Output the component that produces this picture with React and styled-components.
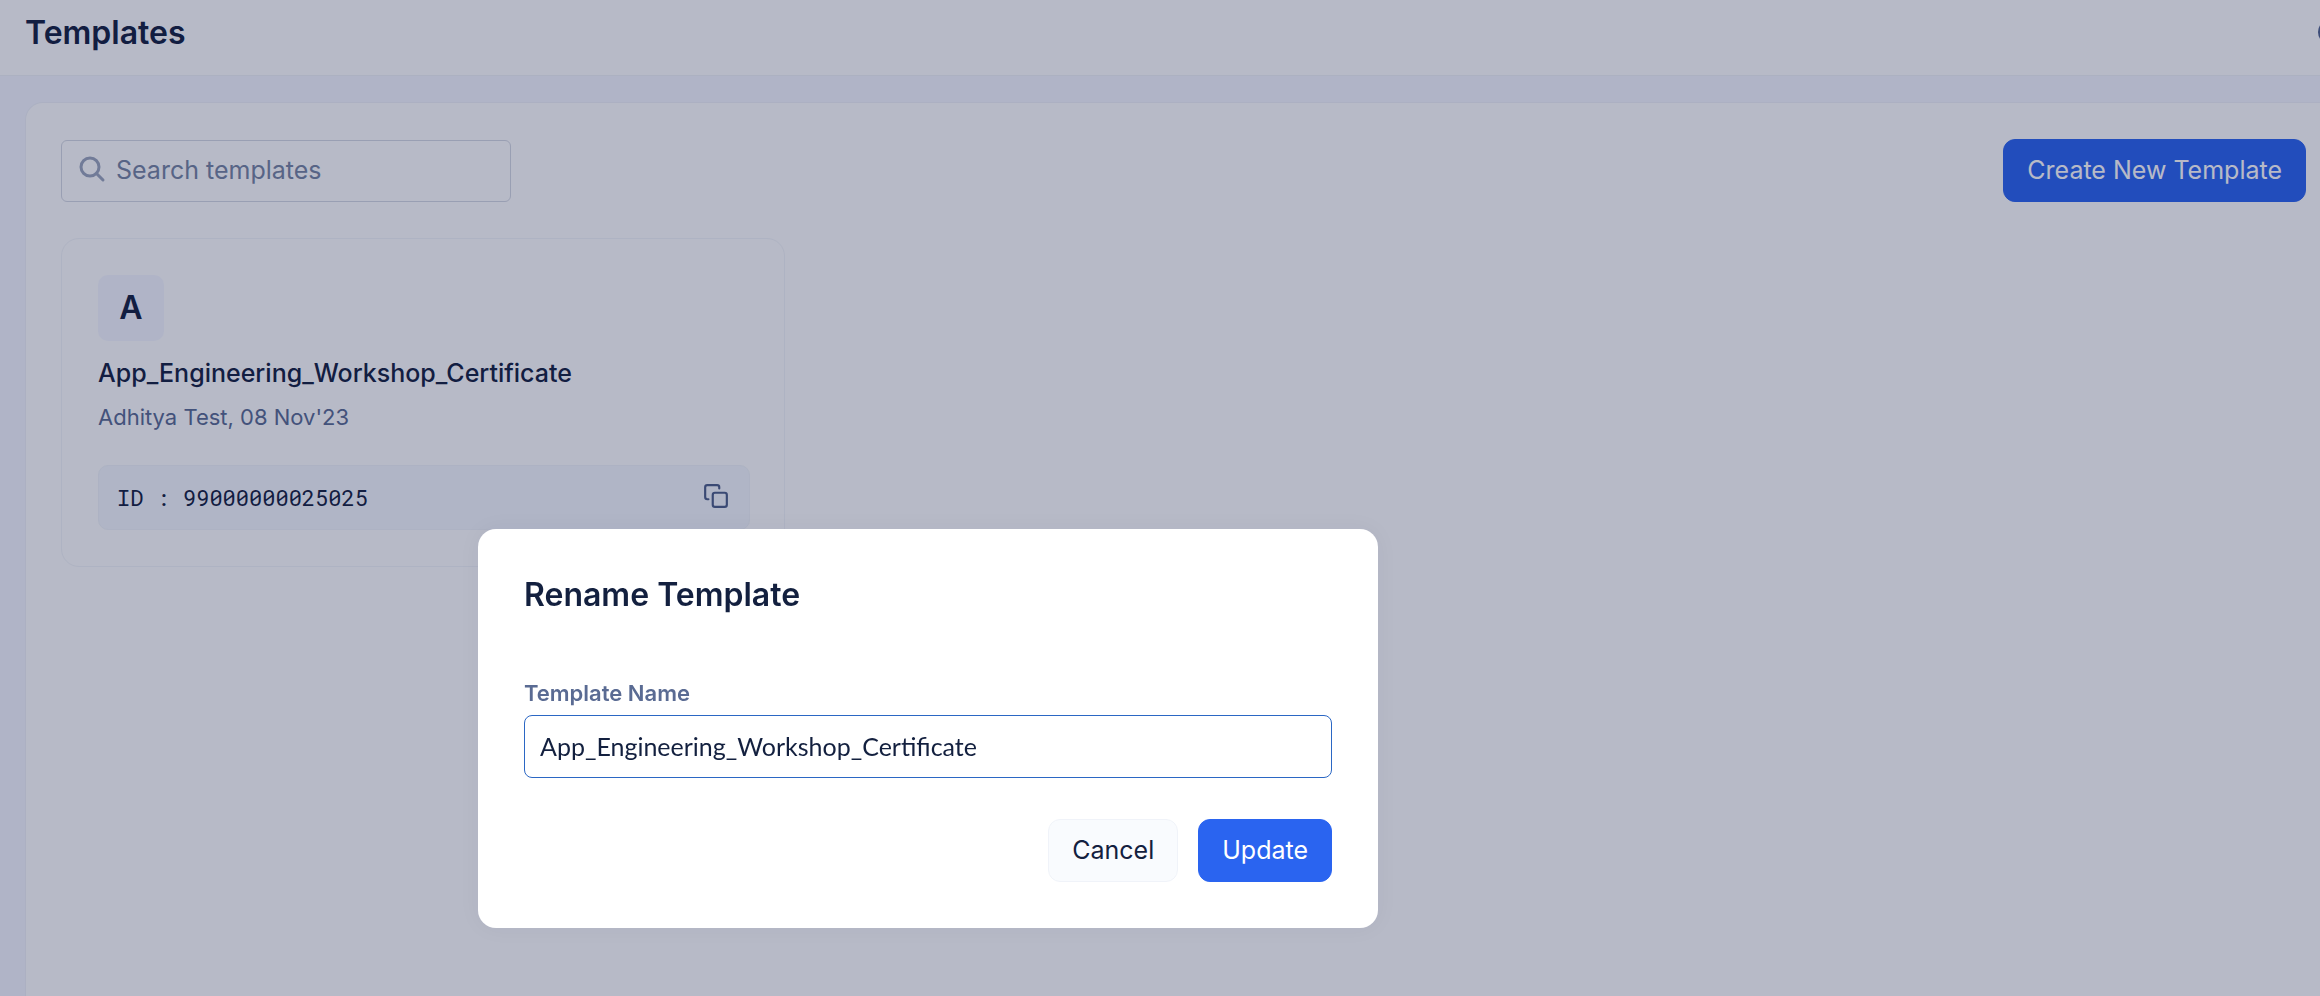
import React, { useState } from "react";
import styled, { createGlobalStyle } from "styled-components";

const GlobalStyle = createGlobalStyle`
    * {
        box-sizing: border-box;
    }
    body {
        margin: 0;
        background-color: #f5f7ff;
        color: #13203f;
        font-family: "Inter", "Liberation Sans", sans-serif;
        overflow: hidden;
    }
    button, input {
        font-family: inherit;
    }
`;
const Page = styled.div`
    min-height: 100vh;
    display: flex;
    flex-direction: column;
    background-color: #f5f7ff;
`;
const Header = styled.header`
    position: relative;
    display: flex;
    align-items: center;
    height: 76px;
    padding: 0 25px 10px;
    background-color: #fff;
    border-bottom: 1px solid #f0f2f7;
`;
const PageTitle = styled.h1`
    margin: 0;
    font-size: 32px;
    font-weight: 600;
    line-height: 40px;
`;
// cut off by the right edge of the window
const StatusDot = styled.span`
    position: absolute;
    right: -22px;
    top: 20px;
    width: 24px;
    height: 24px;
    border-radius: 50%;
    background-color: #4f628e;
`;
const Panel = styled.main`
    flex: 1;
    margin: 26px 0 0 25px;
    padding: 36px 14px 36px 35px;
    background-color: #fff;
    border: 1px solid #eff1f8;
    border-right: none;
    border-bottom: none;
    border-radius: 18px 0 0 0;
`;
const Toolbar = styled.div`
    display: flex;
    align-items: center;
    justify-content: space-between;
    margin-bottom: 36px;
`;
const SearchBox = styled.label`
    display: flex;
    align-items: center;
    gap: 10px;
    width: 450px;
    height: 62px;
    padding: 0 16px 2px;
    border: 1px solid #d5d9e2;
    border-radius: 6px;
`;
const SearchInput = styled.input`
    flex: 1;
    min-width: 0;
    padding: 0;
    border: none;
    outline: none;
    background: transparent;
    font-size: 25px;
    line-height: 32px;
    color: #13203f;
    &::placeholder {
        color: #7685a3;
        opacity: 1;
    }
`;
const Button = styled.button`
    height: 63px;
    padding: 0 23px 2px;
    font-size: 25px;
    line-height: 32px;
    border-radius: 12px;
    border: 1px solid ${(props) => (props.$primary ? "#2a64f0" : "#f0f3f9")};
    background-color: ${(props) => (props.$primary ? "#2a64f0" : "#f9fbfe")};
    color: ${(props) => (props.$primary ? "#fff" : "#13203f")};
    cursor: pointer;
`;
const Card = styled.article`
    width: 724px;
    padding: 36px 34px 36px 36px;
    border: 1px solid #f3f5f9;
    border-radius: 18px;
`;
const Avatar = styled.div`
    display: flex;
    align-items: center;
    justify-content: center;
    width: 66px;
    height: 66px;
    border-radius: 10px;
    background-color: #f5f7ff;
    font-size: 32px;
    font-weight: 600;
    line-height: 40px;
`;
const CardTitle = styled.h2`
    margin: 16px 0 12px;
    font-size: 25px;
    font-weight: 500;
    line-height: 32px;
`;
const CardMeta = styled.p`
    margin: 0 0 32px;
    font-size: 22px;
    line-height: 32px;
    color: #5a6b93;
`;
const IdRow = styled.div`
    display: flex;
    align-items: center;
    justify-content: space-between;
    height: 65px;
    padding: 0 20px 0 18px;
    border: 1px solid #f1f4f9;
    border-radius: 10px;
    background-color: #f5f8fe;
    font-family: "Roboto Mono", "DejaVu Sans Mono", monospace;
    font-size: 22px;
    line-height: 32px;
`;
const CopyButton = styled.button`
    display: flex;
    padding: 0 0 4px;
    border: none;
    background: none;
    color: #4c5d88;
    cursor: pointer;
`;
const Overlay = styled.div`
    position: fixed;
    inset: 0;
    display: flex;
    align-items: flex-start;
    padding: 529px 0 0 478px;
    background-color: rgba(18, 28, 68, 0.3);
`;
const Dialog = styled.form`
    display: flex;
    flex-direction: column;
    width: 900px;
    padding: 46px;
    border-radius: 18px;
    background-color: #fff;
    box-shadow: 0 0 24px rgba(18, 28, 68, 0.04);
`;
const DialogTitle = styled.h2`
    margin: 0 0 64px;
    font-size: 32px;
    font-weight: 600;
    line-height: 40px;
`;
const FieldLabel = styled.label`
    margin-bottom: 8px;
    font-size: 22px;
    font-weight: 600;
    line-height: 28px;
    color: #5a6b93;
`;
const TextInput = styled.input`
    height: 63px;
    padding: 0 15px 2px;
    border: 1px solid #2b67c4;
    border-radius: 8px;
    outline: none;
    background-color: #fff;
    color: #13203f;
    && {
        font-family: "Lato", sans-serif;
    }
    font-size: 25px;
    line-height: 32px;
`;
const Actions = styled.div`
    display: flex;
    justify-content: flex-end;
    gap: 20px;
    margin-top: 41px;
`;

const SearchIcon = () => (
    <svg width="28" height="28" viewBox="0 0 28 28" fill="none" stroke="#9ba5bc" strokeWidth="3" strokeLinecap="round">
        <circle cx="12" cy="11" r="9" />
        <path d="M18.5 17.5L25 24" />
    </svg>
);
const CopyIcon = () => (
    <svg width="26" height="26" viewBox="0 0 24 24" fill="none" stroke="currentColor" strokeWidth="2" strokeLinecap="round" strokeLinejoin="round">
        <rect x="9" y="9" width="13" height="13" rx="2" />
        <path d="M5 15H4a2 2 0 0 1-2-2V4a2 2 0 0 1 2-2h9a2 2 0 0 1 2 2v1" />
    </svg>
);

const template = {
    name: "App_Engineering_Workshop_Certificate",
    meta: "Adhitya Test, 08 Nov'23",
    id: "99000000025025"
};

function TemplateCard({ name, meta, id }) {
    return (
        <Card>
            <Avatar>{name[0]}</Avatar>
            <CardTitle>{name}</CardTitle>
            <CardMeta>{meta}</CardMeta>
            <IdRow>
                <span>ID : {id}</span>
                <CopyButton type="button" aria-label="Copy ID">
                    <CopyIcon />
                </CopyButton>
            </IdRow>
        </Card>
    );
}

function RenameDialog() {
    const [name, setName] = useState(template.name);
    return (
        <Overlay>
            <Dialog role="dialog" aria-labelledby="rename-title" onSubmit={(e) => e.preventDefault()}>
                <DialogTitle id="rename-title">Rename Template</DialogTitle>
                <FieldLabel htmlFor="template-name">Template Name</FieldLabel>
                <TextInput id="template-name" value={name} spellCheck={false} onChange={(e) => setName(e.target.value)} />
                <Actions>
                    <Button type="button">Cancel</Button>
                    <Button type="submit" $primary>Update</Button>
                </Actions>
            </Dialog>
        </Overlay>
    );
}

export default function App() {
    return (
        <>
            <GlobalStyle />
            <Page>
                <Header>
                    <PageTitle>Templates</PageTitle>
                    <StatusDot />
                </Header>
                <Panel>
                    <Toolbar>
                        <SearchBox>
                            <SearchIcon />
                            <SearchInput type="text" placeholder="Search templates" aria-label="Search templates" />
                        </SearchBox>
                        <Button type="button" $primary>Create New Template</Button>
                    </Toolbar>
                    <TemplateCard {...template} />
                </Panel>
            </Page>
            <RenameDialog />
        </>
    );
}
